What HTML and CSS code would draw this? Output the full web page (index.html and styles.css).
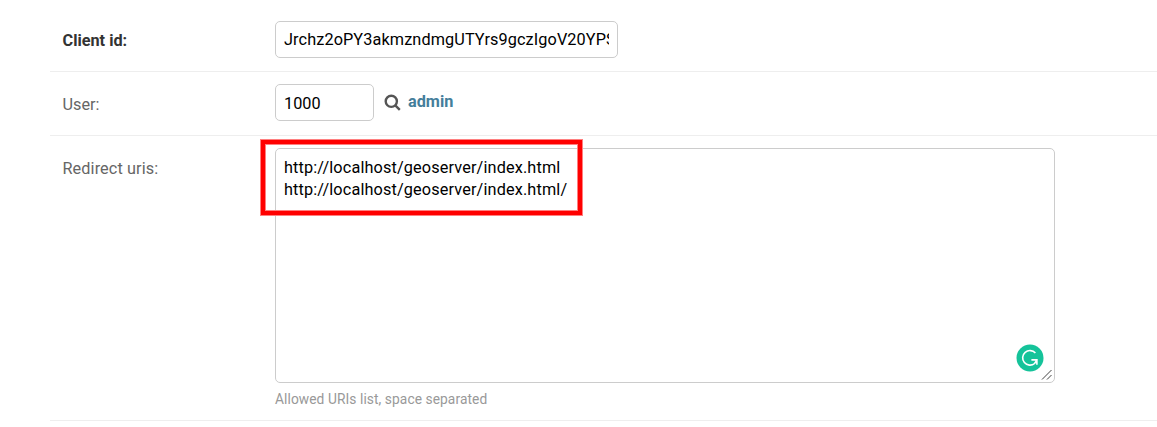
FILE: index.html
```
<!DOCTYPE html>
<html lang="en">
<head>
<meta charset="utf-8">
<title>Change application</title>
<link rel="stylesheet" href="styles.css">
</head>
<body>
<form class="form">
  <div class="row row-first">
    <div class="label required">Client id:</div>
    <div class="field client-id"><div class="value">Jrchz2oPY3akmzndmgUTYrs9gczIgoV20YPS</div></div>
  </div>
  <div class="row">
    <div class="label">User:</div>
    <div class="field user-id"><div class="value">1000</div></div>
    <svg class="search" width="18" height="18" viewBox="0 0 18 18"><circle cx="7.3" cy="7.3" r="5.6"/><path d="M11.3 11.3L15.8 15.8"/></svg>
    <a class="user-link">admin</a>
  </div>
  <div class="row row-uris">
    <div class="label label-uris">Redirect uris:</div>
    <div class="uris">
      <div class="textarea">
        <div class="url">http://localhost/geoserver/index.html</div>
        <div class="url">http://localhost/geoserver/index.html/</div>
        <svg class="badge" width="28" height="28" viewBox="0 0 28 28"><circle cx="14" cy="14" r="13.5" fill="#15c39a"/><path d="M19.4 9A7.3 7.3 0 1 0 18.6 19.5L20.4 16.6M15.4 15.9H20.9V20.8" fill="none" stroke="#fff" stroke-width="1.6"/></svg>
        <svg class="grip" width="12" height="12" viewBox="0 0 12 12"><path d="M1 10.5L10.5 1M6 10.5L10.5 6"/></svg>
      </div>
      <div class="highlight"></div>
      <div class="help">Allowed URIs list, space separated</div>
    </div>
  </div>
</form>
</body>
</html>
```
FILE: styles.css
```
* { box-sizing: border-box; }
body { margin: 0; height: 427px; overflow: hidden; background: #fff; color: #000; font: 16.25px/22px Roboto, sans-serif; }
.form { margin-left: 50px; }
.row { display: flex; align-items: flex-start; height: 64px; padding: 12px 0 0 12.5px; border-bottom: 1px solid #eee; }
.row-first { height: 72px; padding-top: 21px; }
.row-uris { height: 285px; }
.label { width: 212.5px; flex: none; padding-top: 10px; color: #666; }
.label-uris { letter-spacing: .1px; }
.required { padding-top: 9px; color: #333; font-weight: 700; }
.field, .textarea { border: 1px solid #ccc; border-radius: 5px; background: #fff; }
.field { height: 37px; padding: 7px 8px; }
.client-id { width: 343px; }
.user-id { width: 99px; padding-top: 8px; }
.value { overflow: hidden; white-space: nowrap; }
.client-id .value { letter-spacing: .11px; }
.search { margin: 10px 0 0 10px; fill: none; stroke: #555; stroke-width: 2.4; }
.user-link { margin: 7px 0 0 6px; color: #447e9b; font-weight: 700; }
.uris { position: relative; width: 780px; }
.textarea { position: relative; height: 235px; padding: 8px; }
.url { letter-spacing: .14px; }
.badge { position: absolute; right: 10px; bottom: 10px; }
.grip { position: absolute; right: 1px; bottom: 1px; fill: none; stroke: #444; stroke-width: 1; }
.highlight { position: absolute; left: -15px; top: -9px; width: 323px; height: 77px; border: 1px solid #ff7f7f; box-shadow: inset 0 0 0 4px #f00, inset 0 0 0 5px #ff7f7f; }
.help { margin-top: 6px; color: #999; font-size: 13.75px; line-height: 20px; letter-spacing: .08px; }
```
